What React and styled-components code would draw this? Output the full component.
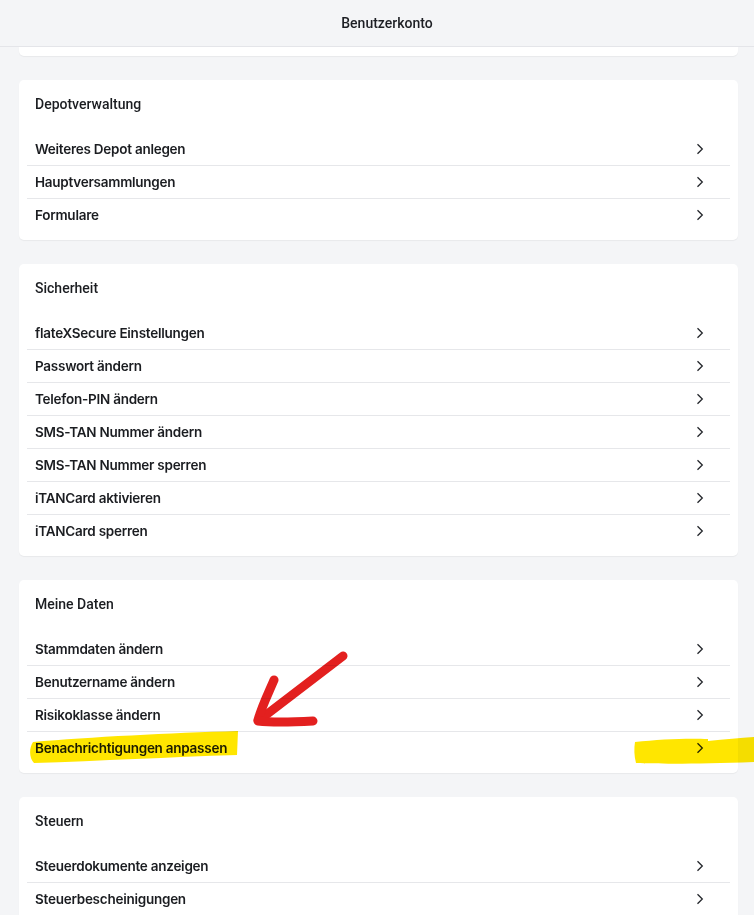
import React from 'react';
import styled, { createGlobalStyle } from 'styled-components';

const GlobalStyle = createGlobalStyle`
  html, body {
    margin: 0;
    padding: 0;
    background: #f4f5f7;
  }
  body {
    font-family: Inter, "Noto Sans", sans-serif;
    color: #1b1d21;
  }
`;

const Page = styled.div`
  position: relative;
  width: 754px;
  height: 915px;
  overflow: hidden;
  background: #f4f5f7;
`;

const Header = styled.header`
  height: 47px;
  display: flex;
  align-items: center;
  justify-content: center;
  padding-left: 20px;
  box-sizing: border-box;
  border-bottom: 1px solid #e4e5e9;
  background: #f4f5f7;
  font-family: Roboto, "Noto Sans", sans-serif;
  font-size: 14px;
  font-weight: 500;
  color: #1d1f24;
`;

const Content = styled.main`
  display: flex;
  flex-direction: column;
  gap: 24px;
  padding: 0 16px 0 19px;
`;

const CardTail = styled.div`
  height: 9px;
  background: #fff;
  border-radius: 0 0 5px 5px;
  box-shadow: 0 1px 1px rgba(0, 0, 0, 0.05);
`;

const Card = styled.section`
  background: #fff;
  border-radius: 5px;
  box-shadow: 0 1px 1px rgba(0, 0, 0, 0.05);
  padding: 14px 8px 9px;
`;

const CardTitle = styled.h2`
  margin: 0 0 19px;
  padding-left: 8px;
  font-family: Roboto, "Noto Sans", sans-serif;
  font-size: 14px;
  line-height: 20px;
  font-weight: 500;
  color: #1b1d21;
`;

const List = styled.ul`
  list-style: none;
  margin: 0;
  padding: 0;
`;

const Row = styled.li`
  height: 32px;
  display: flex;
  align-items: center;
  justify-content: space-between;
  padding: 0 26px 0 8px;
  border-bottom: 1px solid #e6e7ea;
  font-size: 13.5px;
  font-weight: 600;
  color: #1b1d21;
  letter-spacing: -0.25px;

  &:last-child {
    border-bottom: none;
  }
`;

const Chevron = styled.svg`
  width: 8px;
  height: 12px;
  flex: none;
`;

const Scribbles = styled.svg`
  position: absolute;
  top: 0;
  left: 0;
  width: 754px;
  height: 915px;
  pointer-events: none;
  mix-blend-mode: multiply;
`;

const sections = [
  {
    title: 'Depotverwaltung',
    items: ['Weiteres Depot anlegen', 'Hauptversammlungen', 'Formulare'],
  },
  {
    title: 'Sicherheit',
    items: [
      'flateXSecure Einstellungen',
      'Passwort ändern',
      'Telefon-PIN ändern',
      'SMS-TAN Nummer ändern',
      'SMS-TAN Nummer sperren',
      'iTANCard aktivieren',
      'iTANCard sperren',
    ],
  },
  {
    title: 'Meine Daten',
    items: [
      'Stammdaten ändern',
      'Benutzername ändern',
      'Risikoklasse ändern',
      'Benachrichtigungen anpassen',
    ],
  },
  {
    title: 'Steuern',
    items: ['Steuerdokumente anzeigen', 'Steuerbescheinigungen'],
  },
];

function ChevronIcon() {
  return (
    <Chevron viewBox="0 0 8 12" fill="none">
      <path d="M1.5 1.2 L6.3 6 L1.5 10.8" stroke="#23262b" strokeWidth="1.3" />
    </Chevron>
  );
}

export default function App() {
  return (
    <Page>
      <GlobalStyle />
      <Header>Benutzerkonto</Header>
      <Content>
        <CardTail />
        {sections.map((section) => (
          <Card key={section.title}>
            <CardTitle>{section.title}</CardTitle>
            <List>
              {section.items.map((item) => (
                <Row key={item}>
                  <span>{item}</span>
                  <ChevronIcon />
                </Row>
              ))}
            </List>
          </Card>
        ))}
      </Content>

      {/* hand-drawn markup from the screenshot */}
      <Scribbles viewBox="0 0 754 915">
        <path
          d="M33 742 C 90 737, 170 733, 238 731 L 237 755 C 170 757, 100 761, 34 763 C 29 758, 29 748, 33 742 Z"
          fill="#ffe600"
        />
        <path
          d="M635 742 C 660 739, 690 738, 708 739 L 708 741 C 725 739, 740 738, 754 737 L 754 762 C 700 764, 660 764, 636 763 C 634 756, 634 748, 635 742 Z"
          fill="#ffe600"
        />
        <g stroke="#e3201f" strokeWidth="9" strokeLinecap="round" strokeLinejoin="round" fill="none">
          <path d="M343 656 L 262 718" />
          <path d="M274 680 C 268 694, 262 706, 258 720" />
          <path d="M258 721 C 275 723, 295 722, 313 721" />
        </g>
      </Scribbles>
    </Page>
  );
}
